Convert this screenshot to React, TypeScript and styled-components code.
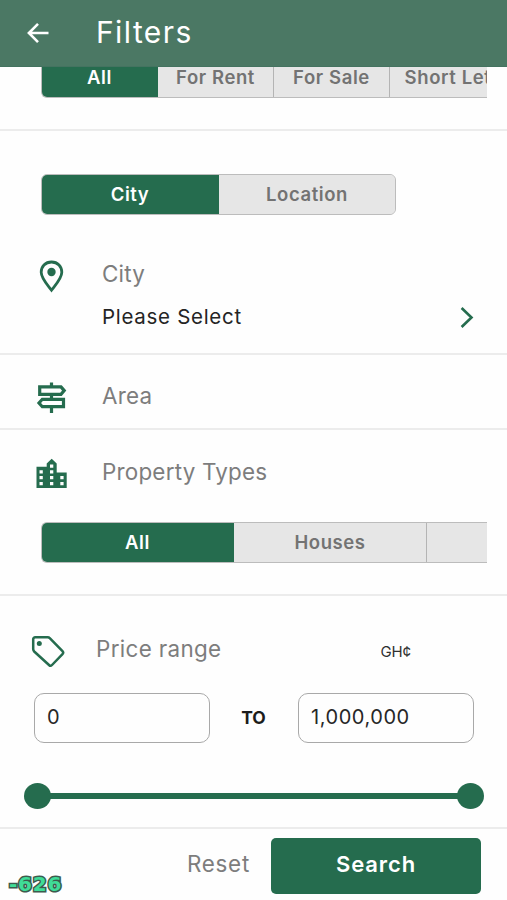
import React from "react";
import styled, { createGlobalStyle } from "styled-components";

const green = "#256c4e";

const GlobalStyle = createGlobalStyle`
  * { box-sizing: border-box; }
  body { margin: 0; background: #fefefe; font-family: Inter, sans-serif; }
  button, input { font-family: inherit; margin: 0; }
`;

const Screen = styled.div`
  position: relative;
  display: flex;
  flex-direction: column;
  width: 507px;
  height: 900px;
  overflow: hidden;
  background: #fefefe;
`;

const Header = styled.header`
  flex: none;
  display: flex;
  align-items: center;
  gap: 46px;
  height: 67px;
  padding: 0 0 3px 26px;
  background: #4b7864;
  border-bottom: 1px solid #447360;
`;

const Title = styled.h1`
  margin: 0;
  color: #fff;
  font-size: 30px;
  font-weight: 400;
  line-height: 36px;
  letter-spacing: 1.4px;
`;

const Content = styled.main`
  flex: 1;
  min-height: 0;
  overflow: hidden;
`;

const Section = styled.section<{ $height: number }>`
  display: flow-root;
  height: ${(p) => p.$height}px;
  border-bottom: 2px solid #ececec;
`;

const ListingSection = styled(Section)`
  padding: 0 20px 0 41px;
  overflow: hidden;
`;

const Segments = styled.div<{ $width?: number; $raised?: boolean }>`
  display: flex;
  width: ${(p) => (p.$width ? `${p.$width}px` : "auto")};
  height: 41px;
  margin-top: ${(p) => (p.$raised ? "-10px" : "0")};
  overflow: hidden;
  border: 1px solid #bcbcbc;
  border-right-width: ${(p) => (p.$width ? "1px" : "0")};
  border-radius: ${(p) => (p.$width ? "6px" : "6px 0 0 6px")};
  background: #e6e6e6;
`;

const Segment = styled.button<{ $width: number; $active?: boolean }>`
  flex: none;
  width: ${(p) => p.$width}px;
  padding: 0 0 2px;
  border: 0;
  border-right: 1px solid ${(p) => (p.$active ? green : "#b4b4b4")};
  background: ${(p) => (p.$active ? green : "#e6e6e6")};
  color: ${(p) => (p.$active ? "#fff" : "#737373")};
  font-size: 18.5px;
  font-weight: 600;
  letter-spacing: 0.6px;
  white-space: nowrap;
  &:last-child { border-right: 0; }
`;

const PlaceTabs = styled.div`
  padding: 43px 0 0 41px;
`;

const Field = styled.div<{ $top: number; $icon?: number }>`
  display: grid;
  grid-template-columns: ${(p) => p.$icon ?? 72}px 1fr auto;
  align-items: center;
  height: 30px;
  margin-top: ${(p) => p.$top}px;
  padding-left: 30px;
`;

const FieldIcon = styled.svg`
  display: block;
  overflow: visible;
`;

const Label = styled.span`
  padding-bottom: 3px;
  color: #7d7d7d;
  font-size: 22.4px;
  line-height: 30px;
  letter-spacing: 0.22px;
`;

const PriceLabel = styled(Label)`
  letter-spacing: 0.35px;
`;

const SelectRow = styled.button`
  display: flex;
  align-items: center;
  justify-content: space-between;
  width: 100%;
  height: 30px;
  margin-top: 13px;
  padding: 0 33px 0 102px;
  border: 0;
  background: none;
  color: #242424;
  font-size: 20.5px;
  letter-spacing: 0.7px;
`;

const Value = styled.span`
  padding-bottom: 2px;
`;

const TypeSegments = styled.div`
  padding: 35px 20px 0 41px;
`;

const Currency = styled.span`
  padding: 1px 96px 0 0;
  color: #303030;
  font-size: 15px;
  letter-spacing: -0.1px;
`;

const PriceInputs = styled.div`
  display: grid;
  grid-template-columns: 176px 88px 176px;
  align-items: center;
  margin-top: 29px;
  padding-left: 34px;
`;

const PriceInput = styled.input`
  width: 176px;
  height: 50px;
  padding: 0 12px 3px;
  border: 1px solid #a9a9a9;
  border-radius: 10px;
  outline: 0;
  background: #fefefe;
  color: #272727;
  font-size: 20px;
  letter-spacing: 0.55px;
`;

const To = styled.span`
  padding: 0 1px 2px 0;
  color: #1c1c1c;
  font-size: 17.5px;
  font-weight: 700;
  text-align: center;
`;

const Slider = styled.div`
  display: flex;
  align-items: center;
  margin: 40px 23px 0 24px;
`;

const Knob = styled.span`
  flex: none;
  width: 27px;
  height: 26px;
  border-radius: 50%;
  background: ${green};
`;

const Track = styled.span`
  flex: 1;
  height: 6px;
  margin: 0 -2px;
  background: ${green};
`;

const Footer = styled.footer`
  flex: none;
  display: flex;
  align-items: flex-start;
  justify-content: flex-end;
  gap: 21px;
  height: 73px;
  padding: 9px 26px 0 0;
  border-top: 2px solid #ececec;
`;

const Reset = styled.button`
  height: 50px;
  padding: 0;
  border: 0;
  background: none;
  color: #7d7d7d;
  font-size: 22.4px;
  letter-spacing: 0.75px;
`;

const Search = styled.button`
  width: 210px;
  height: 56px;
  padding: 0 0 4px;
  border: 0;
  border-radius: 5px;
  background: ${green};
  color: #fff;
  font-size: 22px;
  font-weight: 600;
  letter-spacing: 0.9px;
`;

const Counter = styled.span`
  position: absolute;
  left: 9px;
  bottom: 5px;
  color: #3fdc97;
  font: 700 20px/22px "DejaVu Sans", sans-serif;
  letter-spacing: 0.8px;
  -webkit-text-stroke: 3px #3d5a4e;
  paint-order: stroke fill;
`;

const BackIcon = () => (
  <FieldIcon width="24" height="24" viewBox="0 0 24 24" fill="none" stroke="#fff" strokeWidth="2.6">
    <path d="M22.5 13H3M12 3.8 2.9 13l9.1 9.2" />
  </FieldIcon>
);

const PinIcon = () => (
  <FieldIcon width="44" height="32" viewBox="0 0 44 32">
    <path
      d="M21.5 2C15.2 2 11.2 6.5 11.2 12.3c0 6 5.5 11.8 10.3 17.9 4.8-6.1 10.3-11.9 10.3-17.9C31.8 6.5 27.8 2 21.5 2Z"
      fill="none"
      stroke={green}
      strokeWidth="2.8"
    />
    <circle cx="21.5" cy="12" r="4.2" fill={green} />
  </FieldIcon>
);

const SignpostIcon = () => (
  <FieldIcon width="44" height="32" viewBox="0 0 44 32" fill="none" stroke={green} strokeWidth="3.2">
    <path d="M21.5 0.5v4M21.5 12.5v5M21.5 25v6" />
    <path d="M9.7 4.9h21.3l3.2 3.7-3.2 3.7H9.7Z" />
    <path d="M33.5 17.3H12.3L9 21l3.3 3.7h21.2Z" />
  </FieldIcon>
);

const CityIcon = () => (
  <FieldIcon width="44" height="32" viewBox="0 0 44 32">
    <path
      fill={green}
      fillRule="evenodd"
      d="M6.500 8.700H16.700V5.500L21.700.8l5 4.700v9H36.700V30H6.500ZM9.500 12.200v3.300h3.300v-3.300ZM9.500 18v3.300h3.300V18ZM9.500 23.900v3.300h3.300v-3.300ZM20 6.500v3.300h3.300V6.500ZM20 12.200v3.300h3.300v-3.300ZM20 18v3.300h3.300V18ZM20 23.900v3.300h3.300v-3.300ZM30.300 18v3.300h3.300V18ZM30.300 23.900v3.300h3.300v-3.300Z"
    />
  </FieldIcon>
);

const TagIcon = () => (
  <FieldIcon width="36" height="32" viewBox="0 0 36 32">
    <path
      d="M5.3 2.3h12.3c1 0 1.7.3 2.4 1l12.5 12.8c1 1 1 2 0 3L22 30c-1 1-2 1-3 0L4.2 16.5c-.7-.7-1-1.4-1-2.4V4.3c0-1.3.8-2 2.1-2Z"
      fill="none"
      stroke={green}
      strokeWidth="2.5"
    />
    <circle cx="9.3" cy="8.4" r="2.5" fill={green} />
  </FieldIcon>
);

const Chevron = () => (
  <FieldIcon width="14" height="22" viewBox="0 0 14 22" fill="none" stroke={green} strokeWidth="2.6">
    <path d="M1.600 2 11.500 11.500 1.600 21" />
  </FieldIcon>
);

export default function App() {
  return (
    <Screen>
      <GlobalStyle />
      <Header>
        <BackIcon />
        <Title>Filters</Title>
      </Header>
      <Content>
        <ListingSection $height={64}>
          <Segments $raised>
            <Segment $width={116} $active>All</Segment>
            <Segment $width={116}>For Rent</Segment>
            <Segment $width={116}>For Sale</Segment>
            <Segment $width={116}>Short Let</Segment>
          </Segments>
        </ListingSection>
        <Section $height={224}>
          <PlaceTabs>
            <Segments $width={355}>
              <Segment $width={177} $active>City</Segment>
              <Segment $width={176}>Location</Segment>
            </Segments>
          </PlaceTabs>
          <Field $top={44}>
            <PinIcon />
            <Label>City</Label>
          </Field>
          <SelectRow>
            <Value>Please Select</Value>
            <Chevron />
          </SelectRow>
        </Section>
        <Section $height={75}>
          <Field $top={26}>
            <SignpostIcon />
            <Label>Area</Label>
          </Field>
        </Section>
        <Section $height={166}>
          <Field $top={27}>
            <CityIcon />
            <Label>Property Types</Label>
          </Field>
          <TypeSegments>
            <Segments>
              <Segment $width={192} $active>All</Segment>
              <Segment $width={193}>Houses</Segment>
              <Segment $width={192} aria-label="More property types" />
            </Segments>
          </TypeSegments>
        </Section>
        <Field $top={38} $icon={66}>
          <TagIcon />
          <PriceLabel>Price range</PriceLabel>
          <Currency>GH¢</Currency>
        </Field>
        <PriceInputs>
          <PriceInput defaultValue="0" />
          <To>TO</To>
          <PriceInput defaultValue="1,000,000" />
        </PriceInputs>
        <Slider>
          <Knob />
          <Track />
          <Knob />
        </Slider>
      </Content>
      <Footer>
        <Reset>Reset</Reset>
        <Search>Search</Search>
      </Footer>
      <Counter>-626</Counter>
    </Screen>
  );
}
